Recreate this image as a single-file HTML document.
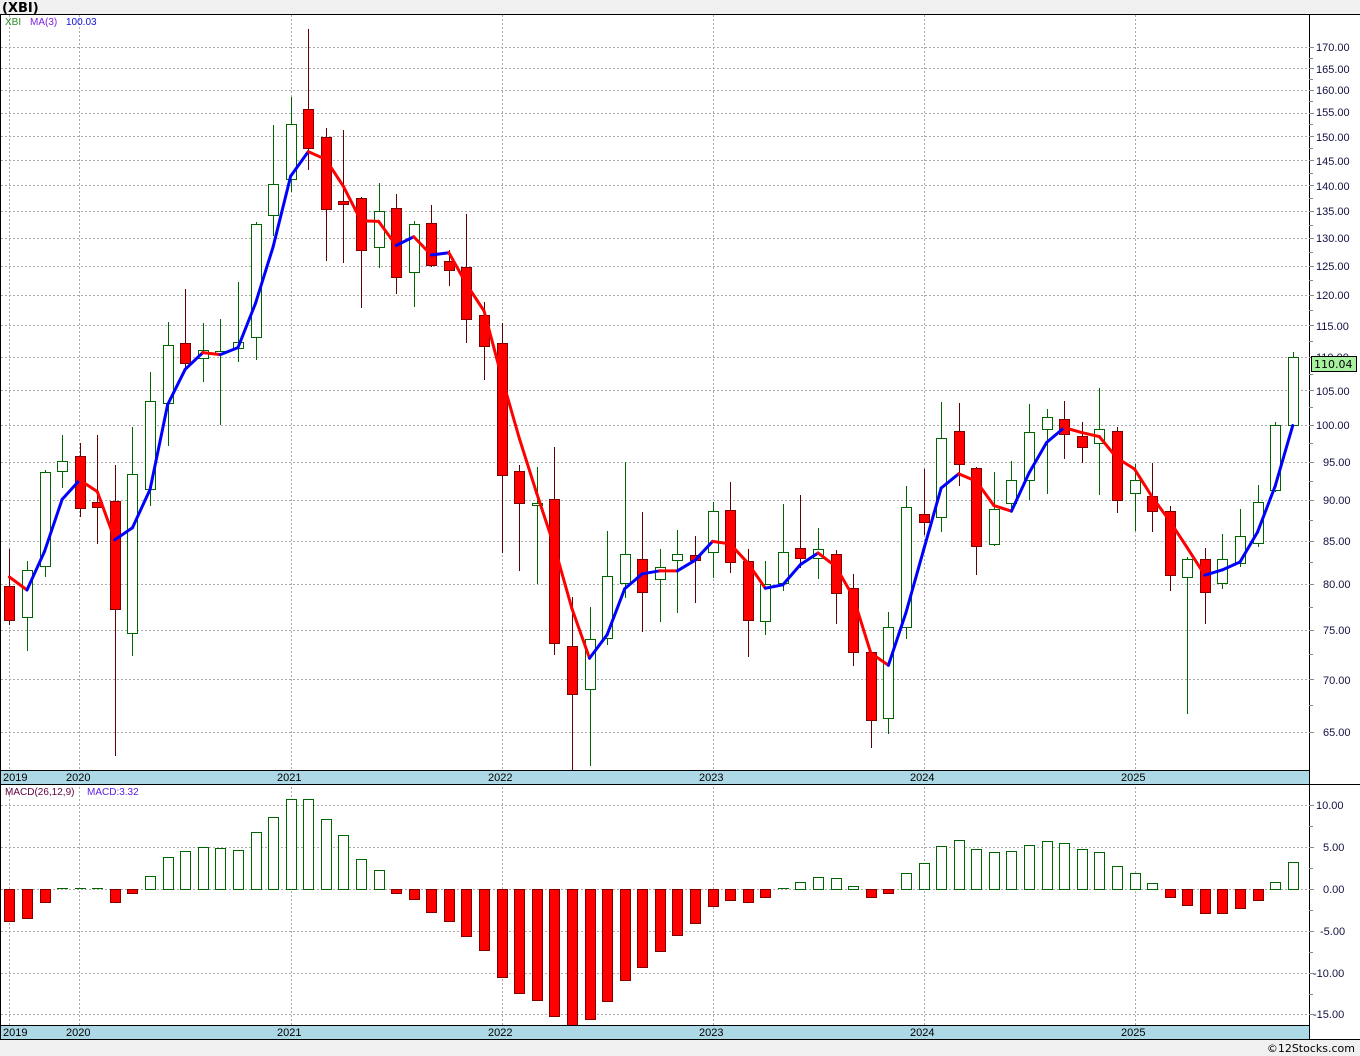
<!DOCTYPE html>
<html><head><meta charset="utf-8">
<style>
html,body{margin:0;padding:0;background:#f0f0f0;}
body{width:1360px;height:1056px;overflow:hidden;position:relative;font-family:"Liberation Sans",sans-serif;}
svg{position:absolute;left:0;top:0;}
svg text{font-family:"Liberation Sans",sans-serif;}
svg .dv{font-family:"DejaVu Sans",sans-serif;}
</style></head>
<body>
<svg id="s" width="1360" height="1056" xmlns="http://www.w3.org/2000/svg">
<rect x="0" y="0" width="1360" height="1056" fill="#f0f0f0"/>
<rect x="0" y="14" width="1360" height="1026" fill="#fff"/>
<g id="grid"></g>
<rect x="0" y="770" width="1309" height="14" fill="#add8e6"/>
<rect x="0" y="1025" width="1309" height="14" fill="#add8e6"/>
<g id="bars"></g>
<g id="cand"></g>
<g id="ma"></g>
<line x1="0" y1="14.5" x2="1360" y2="14.5" stroke="#000"/>
<line x1="0.5" y1="14" x2="0.5" y2="1040" stroke="#000"/>
<line x1="1309.5" y1="14" x2="1309.5" y2="1040" stroke="#000"/>
<line x1="0" y1="770.5" x2="1309" y2="770.5" stroke="#000"/>
<line x1="0" y1="784.5" x2="1360" y2="784.5" stroke="#000"/>
<line x1="0" y1="1025.5" x2="1309" y2="1025.5" stroke="#000"/>
<line x1="0" y1="1039.5" x2="1360" y2="1039.5" stroke="#000"/>
<g id="ticks"></g>
<text x="2" y="12" font-size="13" font-weight="bold" fill="#000" class="dv">(XBI)</text>
<text x="5" y="25" font-size="10" fill="#2a8a2a">XBI</text>
<text x="30" y="25" font-size="10" fill="#8020e0">MA(3)</text>
<text x="66" y="25" font-size="10" fill="#1010e0">100.03</text>
<text x="5" y="795" font-size="10" fill="#600040">MACD(26,12,9)</text>
<text x="87" y="795" font-size="10" fill="#6020e0">MACD:3.32</text>
<g font-size="11" fill="#000" class="dv">
<text x="3" y="781">2019</text><text x="66" y="781">2020</text><text x="277" y="781">2021</text><text x="488" y="781">2022</text><text x="699" y="781">2023</text><text x="910" y="781">2024</text><text x="1121" y="781">2025</text>
<text x="3" y="1036">2019</text><text x="66" y="1036">2020</text><text x="277" y="1036">2021</text><text x="488" y="1036">2022</text><text x="699" y="1036">2023</text><text x="910" y="1036">2024</text><text x="1121" y="1036">2025</text>
</g>
<g font-size="11" fill="#101040" class="dv">
<text x="1316" y="51">170.00</text><text x="1316" y="73">165.00</text><text x="1316" y="94">160.00</text><text x="1316" y="116">155.00</text><text x="1316" y="141">150.00</text><text x="1316" y="165">145.00</text><text x="1316" y="190">140.00</text><text x="1316" y="215">135.00</text><text x="1316" y="242">130.00</text><text x="1316" y="270">125.00</text><text x="1316" y="299">120.00</text><text x="1316" y="330">115.00</text><text x="1316" y="361">110.00</text><text x="1316" y="395">105.00</text><text x="1316" y="429">100.00</text><text x="1323" y="466">95.00</text><text x="1323" y="504">90.00</text><text x="1323" y="545">85.00</text><text x="1323" y="588">80.00</text><text x="1323" y="634">75.00</text><text x="1323" y="684">70.00</text><text x="1323" y="736">65.00</text>
<text x="1316" y="809">10.00</text><text x="1323" y="851">5.00</text><text x="1323" y="893">0.00</text><text x="1320" y="935">-5.00</text><text x="1313" y="977">-10.00</text><text x="1313" y="1018">-15.00</text>
</g>
<rect x="1311.5" y="356.5" width="45" height="15" fill="#a8f0a0" stroke="#000"/>
<text x="1314" y="368" font-size="11" fill="#000" class="dv">110.04</text>
<text x="1355" y="1052" font-size="11" fill="#000" text-anchor="end" class="dv">©12Stocks.com</text>
</svg>
<script>
var NS="http://www.w3.org/2000/svg";
function el(p,t,a){var e=document.createElementNS(NS,t);for(var k in a)e.setAttribute(k,a[k]);document.getElementById(p).appendChild(e);return e;}
function Y(p){return 47+712.5*Math.log(170/p);}
function P(y){return 170*Math.exp(-(y-47)/712.5);}
function X(n){return 9.4+17.58*n;}
var prices=[];for(var p=65;p<=170;p+=5)prices.push(p);
prices.forEach(function(p){var y=Math.round(Y(p))+0.5;el("grid","line",{x1:1,y1:y,x2:1309,y2:y,stroke:"#aaa","stroke-dasharray":"2,2"});el("ticks","line",{x1:1309,y1:y,x2:1314,y2:y,stroke:"#888"});var y2=Math.round(Y(p+2.5))+0.5;if(p<170)el("ticks","line",{x1:1309,y1:y2,x2:1313,y2:y2,stroke:"#888"});});
[10,5,0,-5,-10,-15].forEach(function(v){var y=Math.round(889-v*8.36)+0.5;el("grid","line",{x1:1,y1:y,x2:1309,y2:y,stroke:"#aaa","stroke-dasharray":"2,2"});el("ticks","line",{x1:1309,y1:y,x2:1314,y2:y,stroke:"#888"});var y2=Math.round(889-(v+2.5)*8.36)+0.5;if(v<10)el("ticks","line",{x1:1309,y1:y2,x2:1313,y2:y2,stroke:"#888"});});
[9,79,291,502,713,924,1135].forEach(function(x){el("grid","line",{x1:x+0.5,y1:15,x2:x+0.5,y2:1039,stroke:"#aaa","stroke-dasharray":"2,2"});});
var C=[[549,625,586,620,'r'],[561,651,570,617,'g'],[470,577,472,566,'g'],[435,488,461,471,'g'],[443,517,456,508,'r'],[435,544,502,507,'r'],[465,756,501,609,'r'],[427,656,474,633,'g'],[372,506,401,489,'g'],[322,446,345,403,'g'],[289,368,343,363,'r'],[323,382,350,358,'g'],[319,425,351,353,'g'],[282,362,342,348,'g'],[222,360,224,337,'g'],[125,236,184,215,'g'],[97,192,124,179,'g'],[29,170,109,148,'r'],[128,261,137,209,'r'],
[130,263,201,204,'r'],[197,308,198,250,'r'],[183,268,211,247,'g'],[194,294,208,277,'r'],[221,307,224,272,'g'],[205,267,223,265,'r'],[250,286,261,270,'r'],[214,343,267,319,'r'],[302,380,315,346,'r'],[323,553,343,475,'r'],[465,571,471,503,'r'],[467,584,503,505,'g'],[447,655,499,643,'r'],[597,770,646,694,'r'],[607,766,639,689,'g'],[531,645,576,638,'g'],[462,598,554,583,'g'],[512,632,559,592,'r'],
[549,622,567,579,'g'],[530,613,554,560,'g'],[536,603,555,560,'r'],[502,578,511,552,'g'],[482,573,510,562,'r'],[549,657,561,620,'r'],[561,635,584,621,'g'],[504,591,552,583,'g'],[495,568,548,558,'r'],[528,579,549,558,'g'],[550,624,554,593,'r'],[574,666,588,652,'r'],[652,748,652,720,'r'],[612,734,627,718,'g'],[486,639,507,627,'g'],[469,535,514,522,'r'],[402,532,438,517,'g'],[403,486,431,464,'r'],
[467,575,468,546,'r'],[472,546,509,544,'g'],[461,510,480,503,'g'],[404,500,432,480,'g'],[409,494,417,429,'g'],[401,459,419,434,'r'],[422,463,436,447,'r'],[388,495,429,443,'g'],[427,513,431,500,'r'],[464,531,480,493,'g'],[463,532,496,511,'r'],[506,591,511,575,'r'],[557,714,559,577,'g'],[548,624,559,592,'r'],[534,589,559,583,'g'],[509,567,536,563,'g'],[485,547,502,543,'g'],[422,492,425,490,'g'],[352,426,357,425,'g']];
C.forEach(function(c,n){var x=Math.round(X(n));var g=c[4]=='g';
el("cand","line",{x1:x+0.5,y1:c[0],x2:x+0.5,y2:c[1],stroke:g?"#006400":"#600000","stroke-width":1});
var h=Math.max(1,c[3]-c[2]);el("cand","rect",{x:x-4.5,y:c[2]+0.5,width:10,height:h,fill:g?"#fff":"#ff0000",stroke:g?"#006400":"#800000","stroke-width":1});});
var cl=C.map(function(c){return P(c[4]=='g'?c[2]:c[3]);});
var m=[577,590];for(var i=2;i<cl.length;i++)m.push(Y((cl[i]+cl[i-1]+cl[i-2])/3));
for(var i=1;i<m.length;i++){el("ma","line",{x1:X(i-1),y1:m[i-1],x2:X(i),y2:m[i],stroke:m[i]<m[i-1]?"#0000ff":"#ff0000","stroke-width":3,"stroke-linecap":"round"});}
var M=[392,383,335,298,298,298,335,308,259,202,184,172,175,181,127,82,28,28,88,136,208,241,308,326,365,392,439,479,560,610,629,677,705,686,632,569,530,482,434,398,347,329,335,320,295,276,262,265,289,322,308,250,220,169,151,178,187,184,166,154,160,178,187,229,250,280,322,344,368,368,353,329,277,217];
M.forEach(function(z,n){var y=790+z/3;var x=Math.round(X(n));var g=y<=889;var top=Math.min(y,889),h=Math.abs(y-889);
if(h<1.5){el("bars","line",{x1:x-5,y1:888.5,x2:x+6,y2:888.5,stroke:"#006400","stroke-width":1});return;}
el("bars","rect",{x:x-4.5,y:Math.round(top)+0.5,width:10,height:Math.round(h),fill:g?"#fff":"#ff0000",stroke:g?"#006400":"#800000"});});
</script>
</body></html>
